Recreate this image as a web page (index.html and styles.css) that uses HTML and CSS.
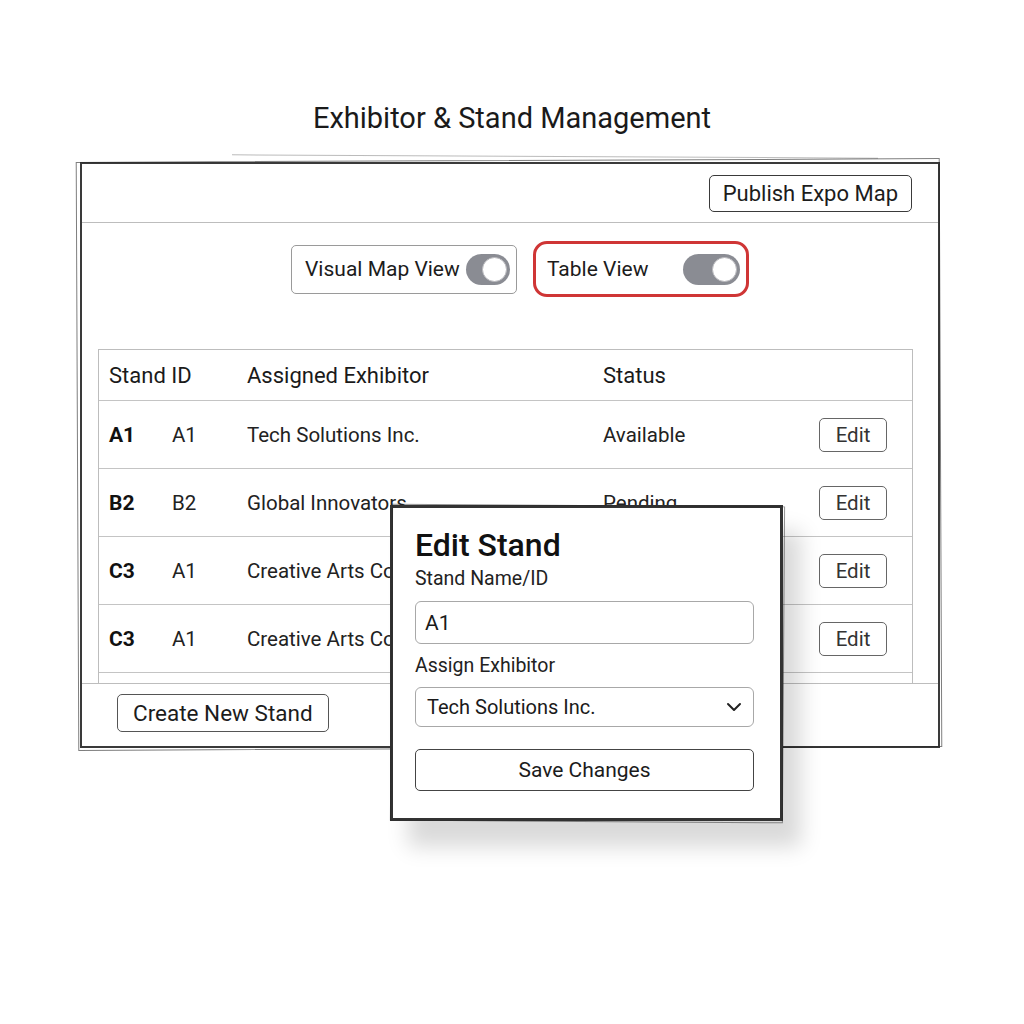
FILE: index.html
```html
<!DOCTYPE html>
<html>
<head>
<meta charset="utf-8">
<link rel="stylesheet" href="styles.css">
</head>
<body>
<div class="page">
  <h1 class="title">Exhibitor &amp; Stand Management</h1>
  <div class="frame">
    <div class="frame-head">
      <button class="btn btn-publish">Publish Expo Map</button>
    </div>
    <div class="toggles">
      <div class="toggle-box">
        <span>Visual Map View</span>
        <span class="switch"><span class="knob"></span></span>
      </div>
      <div class="toggle-box active">
        <span>Table View</span>
        <span class="switch wide"><span class="knob"></span></span>
      </div>
    </div>
    <div class="table-wrap">
      <div class="trow thead">
        <div class="c-id span2">Stand ID</div>
        <div class="c-ex">Assigned Exhibitor</div>
        <div class="c-st">Status</div>
        <div></div>
      </div>
      <div class="trow">
        <div class="c-id b">A1</div><div class="c-id2">A1</div>
        <div class="c-ex">Tech Solutions Inc.</div>
        <div class="c-st">Available</div>
        <div class="c-act"><button class="btn btn-edit">Edit</button></div>
      </div>
      <div class="trow">
        <div class="c-id b">B2</div><div class="c-id2">B2</div>
        <div class="c-ex">Global Innovators</div>
        <div class="c-st">Pending</div>
        <div class="c-act"><button class="btn btn-edit">Edit</button></div>
      </div>
      <div class="trow">
        <div class="c-id b">C3</div><div class="c-id2">A1</div>
        <div class="c-ex">Creative Arts Co.</div>
        <div class="c-st">Reserved</div>
        <div class="c-act"><button class="btn btn-edit">Edit</button></div>
      </div>
      <div class="trow">
        <div class="c-id b">C3</div><div class="c-id2">A1</div>
        <div class="c-ex">Creative Arts Co.</div>
        <div class="c-st">Reserved</div>
        <div class="c-act"><button class="btn btn-edit">Edit</button></div>
      </div>
      <div class="trow"></div>
    </div>
    <div class="frame-foot">
      <button class="btn btn-create">Create New Stand</button>
    </div>
  </div>

  <div class="modal">
    <h2 class="modal-title">Edit Stand</h2>
    <label class="lbl">Stand Name/ID</label>
    <div class="field">A1</div>
    <label class="lbl lbl2">Assign Exhibitor</label>
    <div class="field select">
      <span>Tech Solutions Inc.</span>
      <svg width="16" height="10" viewBox="0 0 16 10"><polyline points="2,2 8,8 14,2" fill="none" stroke="#222" stroke-width="2" stroke-linecap="round" stroke-linejoin="round"/></svg>
    </div>
    <button class="btn btn-save">Save Changes</button>
  </div>
</div>
</body>
</html>
```
FILE: styles.css
```css
* { box-sizing: border-box; }
html, body { margin: 0; padding: 0; background: #fff; }
body { font-family: Roboto, "Noto Sans", Arial, sans-serif; color: #1c1c1c; }

.page { position: relative; width: 1024px; height: 1024px; padding-top: 100px; }

.title {
  margin: 0;
  text-align: center;
  font-size: 29px;
  font-weight: 400;
  line-height: 36px;
  color: #1a1a1a;
}

.frame {
  position: relative;
  margin: 26px 0 0 80px;
  width: 860px;
  height: 586px;
  border: 2px solid #3a3a3a;
  display: flex;
  flex-direction: column;
}
.frame::before {
  content: "";
  position: absolute;
  inset: -4px -3px -3px -5px;
  border: 1.5px solid rgba(40,40,40,0.6);
  transform: rotate(-0.25deg);
  pointer-events: none;
}
.frame::after {
  content: "";
  position: absolute;
  left: 150px; right: 60px; top: -8px;
  border-top: 1px solid rgba(60,60,60,0.35);
  transform: rotate(0.3deg);
  pointer-events: none;
}

.btn {
  font-family: Roboto, "Noto Sans", Arial, sans-serif;
  background: #fff;
  color: #1c1c1c;
  border: 1.5px solid #555;
  border-radius: 5px;
  cursor: pointer;
}

.frame-head {
  height: 59px;
  border-bottom: 1px solid #bdbdbd;
  display: flex;
  justify-content: flex-end;
  align-items: center;
  padding-right: 26px;
}
.btn-publish {
  font-size: 22px;
  height: 37px;
  padding: 0 13px;
  border-color: #3a3a3a;
}

.toggles {
  height: 92px;
  margin-bottom: 34px;
  display: flex;
  justify-content: center;
  align-items: center;
  gap: 16px;
  padding-left: 20px;
}
.toggle-box {
  display: flex;
  align-items: center;
  justify-content: space-between;
  font-size: 21px;
  height: 49px;
  width: 226px;
  padding: 0 6px 0 13px;
  border: 1.5px solid #9a9a9a;
  border-radius: 5px;
}
.toggle-box.active {
  width: 216px;
  height: 56px;
  border: 3px solid #cf3535;
  border-radius: 14px;
  padding: 0 6px 0 11px;
}
.switch {
  position: relative;
  display: inline-block;
  width: 44px;
  height: 31px;
  border-radius: 16px;
  background: #8a8c93;
}
.switch.wide { width: 57px; }
.knob {
  position: absolute;
  right: 3px; top: 3px;
  width: 25px; height: 25px;
  border-radius: 50%;
  background: #fff;
  border: 1px solid #b8b8bc;
}

.table-wrap {
  margin-left: 16px;
  width: 815px;
  height: 334px;
  border-top: 1px solid #bdbdbd;
  border-left: 1px solid #bdbdbd;
  border-right: 1px solid #bdbdbd;
  overflow: hidden;
}
.trow {
  display: grid;
  grid-template-columns: 63px 75px 356px 216px 68px;
  padding-left: 10px;
  align-items: center;
  height: 68px;
  border-bottom: 1px solid #c4c4c4;
  font-size: 20.5px;
  color: #222;
}
.thead { height: 51px; font-size: 22px; color: #1a1a1a; }
.thead .span2 { grid-column: span 2; }
.b { font-weight: 700; font-size: 21px; color: #111; }
.btn-edit {
  width: 68px;
  height: 34px;
  font-size: 20.5px;
  border-color: #666;
  color: #333;
}

.frame-foot {
  flex: 1;
  border-top: 1px solid #bdbdbd;
  display: flex;
  align-items: center;
  padding-left: 35px;
  padding-bottom: 4px;
}
.btn-create {
  font-size: 22.5px;
  height: 38px;
  padding: 0 15px;
  border-color: #555;
}

.modal {
  position: absolute;
  left: 390px;
  top: 505px;
  width: 393px;
  height: 316px;
  background: #fff;
  border: 3px solid #333;
  padding: 18px 26px 0 22px;
  box-shadow: 18px 26px 20px rgba(0,0,0,0.15);
  display: flex;
  flex-direction: column;
}
.modal::before {
  content: "";
  position: absolute;
  inset: -3px -4px -4px -2px;
  border: 1.5px solid rgba(40,40,40,0.5);
  transform: rotate(0.4deg);
  pointer-events: none;
}
.modal-title {
  margin: 0;
  font-size: 32px;
  font-weight: 500;
  line-height: 38px;
  color: #111;
}
.lbl {
  font-size: 19.5px;
  line-height: 24px;
  margin-top: 3px;
  color: #222;
}
.lbl2 { margin-top: 10px; }
.field {
  margin-top: 10px;
  height: 43px;
  border: 1px solid #a8a8a8;
  border-radius: 6px;
  display: flex;
  align-items: center;
  padding: 0 9px;
  font-size: 21px;
  color: #1a1a1a;
}
.select {
  margin-top: 9px;
  height: 40px;
  justify-content: space-between;
  padding: 0 11px 0 11px;
  font-size: 20px;
}
.btn-save {
  margin-top: 22px;
  height: 42px;
  font-size: 21px;
  border-color: #444;
}
```
